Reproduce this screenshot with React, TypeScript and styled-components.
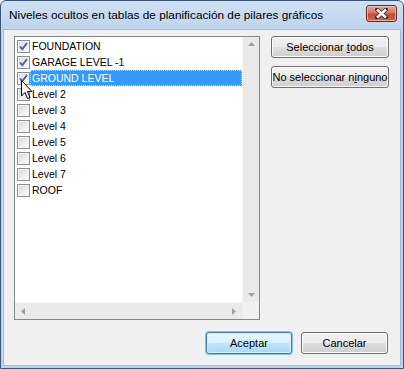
import React from "react";
import styled, { createGlobalStyle, css } from "styled-components";

const GlobalStyle = createGlobalStyle`
  html, body {
    margin: 0;
    padding: 0;
    background: #ffffff;
  }
  body {
    font-family: "Liberation Sans", Arial, sans-serif;
  }
`;

const StyledWindow = styled.div`
  position: relative;
  box-sizing: border-box;
  width: 404px;
  height: 369px;
  border: 1px solid #3b5677;
  border-radius: 6px 6px 0 0;
  background: linear-gradient(180deg, #cfe0f3 0%, #bdd4ec 30px, #bcd4ec 100%);
  padding: 0 2px 2px 2px;
  display: flex;
  flex-direction: column;
`;

const StyledTitleBar = styled.div`
  height: 28px;
  display: flex;
  align-items: center;
  justify-content: space-between;
  padding: 0 4px 0 6px;
  font-size: 11.8px;
  color: #000000;
`;

const StyledCloseButton = styled.div`
  box-sizing: border-box;
  width: 31px;
  height: 17px;
  margin-top: -3px;
  border: 1px solid #6b2a24;
  border-radius: 3px;
  background: linear-gradient(180deg, #e8a493 0%, #d47a64 45%, #c24a32 55%, #cf6a50 100%);
  box-shadow: inset 0 0 0 1px rgba(255, 220, 210, 0.6);
  display: flex;
  align-items: center;
  justify-content: center;
`;

const StyledClient = styled.div`
  flex: 1;
  box-sizing: border-box;
  border: 1px solid #a6bcd6;
  background: #f0f0f0;
  padding: 6px 11px 11px 10px;
  display: grid;
  grid-template-columns: 246px 1fr;
  grid-template-rows: 1fr auto;
  column-gap: 11px;
  row-gap: 12px;
`;

const StyledListBox = styled.div`
  box-sizing: border-box;
  border: 1px solid #828790;
  background: #ffffff;
  display: grid;
  grid-template-columns: 1fr 17px;
  grid-template-rows: 1fr 17px;
`;

const StyledItems = styled.div`
  padding: 1px 0 0 2px;
  font-size: 10.5px;
`;

const StyledItem = styled.div`
  height: 16px;
  display: flex;
  align-items: center;
`;

const StyledLabel = styled.span<{ $selected?: boolean }>`
  box-sizing: border-box;
  height: 16px;
  line-height: 15px;
  padding: 0 1px;
  border: 1px solid transparent;
  ${(p) =>
    p.$selected &&
    css`
      flex: 1;
      background: #3399ff;
      color: #ffffff;
      border: 1px dotted #b9dcff;
    `}
`;

const StyledCheck = styled.span<{ $checked?: boolean }>`
  box-sizing: border-box;
  width: 13px;
  height: 13px;
  flex: 0 0 13px;
  border: 1px solid #8f8f8f;
  background: linear-gradient(135deg, #d6d6d6 0%, #f0f0f0 60%, #fbfbfb 100%);
  box-shadow: inset 0 0 0 1px #f4f4f4;
  display: flex;
  align-items: center;
  justify-content: center;
  ${(p) =>
    p.$checked &&
    css`
      background: linear-gradient(135deg, #d2d7e0 0%, #eceff3 60%, #ffffff 100%);
    `}
`;

const StyledVScroll = styled.div`
  grid-column: 2;
  grid-row: 1;
  background: #eaeaea;
  border-left: 1px solid #f6f6f6;
  display: flex;
  flex-direction: column;
  justify-content: space-between;
  align-items: center;
  padding: 5px 0;
`;

const StyledHScroll = styled.div`
  grid-column: 1;
  grid-row: 2;
  background: #eaeaea;
  border-top: 1px solid #f6f6f6;
  display: flex;
  justify-content: space-between;
  align-items: center;
  padding: 0 6px;
`;

const StyledCorner = styled.div`
  grid-column: 2;
  grid-row: 2;
  background: #f0f0f0;
`;

const StyledSideButtons = styled.div`
  display: flex;
  flex-direction: column;
  gap: 8px;
`;

const StyledButton = styled.button<{ $default?: boolean; $width?: number }>`
  box-sizing: border-box;
  width: ${(p) => (p.$width ? `${p.$width}px` : "100%")};
  height: 22px;
  padding: 0;
  white-space: nowrap;
  border: 1px solid #707070;
  border-radius: 3px;
  font-family: "Liberation Sans", Arial, sans-serif;
  font-size: 11px;
  color: #000000;
  background: linear-gradient(180deg, #f2f2f2 0%, #ebebeb 48%, #dddddd 52%, #cfcfcf 100%);
  box-shadow: inset 0 0 0 1px #fbfbfb;
  ${(p) =>
    p.$default &&
    css`
      border-color: #3c7fb1;
      background: linear-gradient(180deg, #eaf6fd 0%, #d9f0fc 48%, #bee6fd 52%, #a7d9f5 100%);
      box-shadow: inset 0 0 0 1px #dcecf8, 0 0 0 1px #7cc4e8;
    `}
`;

const StyledFooter = styled.div`
  grid-column: 1 / span 2;
  display: flex;
  justify-content: flex-end;
  gap: 9px;
  padding-right: 1px;
`;

const StyledCursor = styled.svg`
  position: absolute;
  left: 20px;
  top: 79px;
`;

const levels = [
  { name: "FOUNDATION", checked: true },
  { name: "GARAGE LEVEL -1", checked: true },
  { name: "GROUND LEVEL", checked: true, selected: true },
  { name: "Level 2" },
  { name: "Level 3" },
  { name: "Level 4" },
  { name: "Level 5" },
  { name: "Level 6" },
  { name: "Level 7" },
  { name: "ROOF" },
];

const CheckMark = () => (
  <svg width="9" height="9" viewBox="0 0 9 9">
    <path d="M1 4.5 L3.3 7.2 L8 1" fill="none" stroke="#4a5f8a" strokeWidth="1.8" />
  </svg>
);

const Arrow = ({ dir }: { dir: "up" | "down" | "left" | "right" }) => {
  const pts = {
    up: "0,4 7,4 3.5,0",
    down: "0,0 7,0 3.5,4",
    left: "4,0 4,7 0,3.5",
    right: "0,0 0,7 4,3.5",
  }[dir];
  const horiz = dir === "left" || dir === "right";
  return (
    <svg width={horiz ? 4 : 7} height={horiz ? 7 : 4}>
      <polygon points={pts} fill="#a0a0a0" />
    </svg>
  );
};

const App = () => {
  return (
    <>
      <GlobalStyle />
      <StyledWindow>
        <StyledTitleBar>
          <span>Niveles ocultos en tablas de planificación de pilares gráficos</span>
          <StyledCloseButton>
            <svg width="13" height="11" viewBox="0 0 13 11">
              <path
                d="M2 1.5 L11 9.5 M11 1.5 L2 9.5"
                stroke="#3a2a2a"
                strokeWidth="4"
                strokeLinecap="round"
              />
              <path d="M2 1.5 L11 9.5 M11 1.5 L2 9.5" stroke="#ffffff" strokeWidth="2.4" />
            </svg>
          </StyledCloseButton>
        </StyledTitleBar>
        <StyledClient>
          <StyledListBox>
            <StyledItems>
              {levels.map((l) => (
                <StyledItem key={l.name}>
                  <StyledCheck $checked={l.checked}>{l.checked && <CheckMark />}</StyledCheck>
                  <StyledLabel $selected={l.selected}>{l.name}</StyledLabel>
                </StyledItem>
              ))}
            </StyledItems>
            <StyledVScroll>
              <Arrow dir="up" />
              <Arrow dir="down" />
            </StyledVScroll>
            <StyledHScroll>
              <Arrow dir="left" />
              <Arrow dir="right" />
            </StyledHScroll>
            <StyledCorner />
          </StyledListBox>
          <StyledSideButtons>
            <StyledButton>
              Seleccionar <u>t</u>odos
            </StyledButton>
            <StyledButton>
              No seleccionar n<u>i</u>nguno
            </StyledButton>
          </StyledSideButtons>
          <StyledFooter>
            <StyledButton $default $width={86}>
              Aceptar
            </StyledButton>
            <StyledButton $width={87}>Cancelar</StyledButton>
          </StyledFooter>
        </StyledClient>
        <StyledCursor width="12" height="20" viewBox="0 0 12 20">
          <path
            d="M0.5 0.5 L0.5 16 L4 12.5 L6.5 18.5 L9 17.5 L6.5 11.5 L11 11.5 Z"
            fill="#ffffff"
            stroke="#000000"
            strokeWidth="1"
          />
        </StyledCursor>
      </StyledWindow>
    </>
  );
};

export default App;
